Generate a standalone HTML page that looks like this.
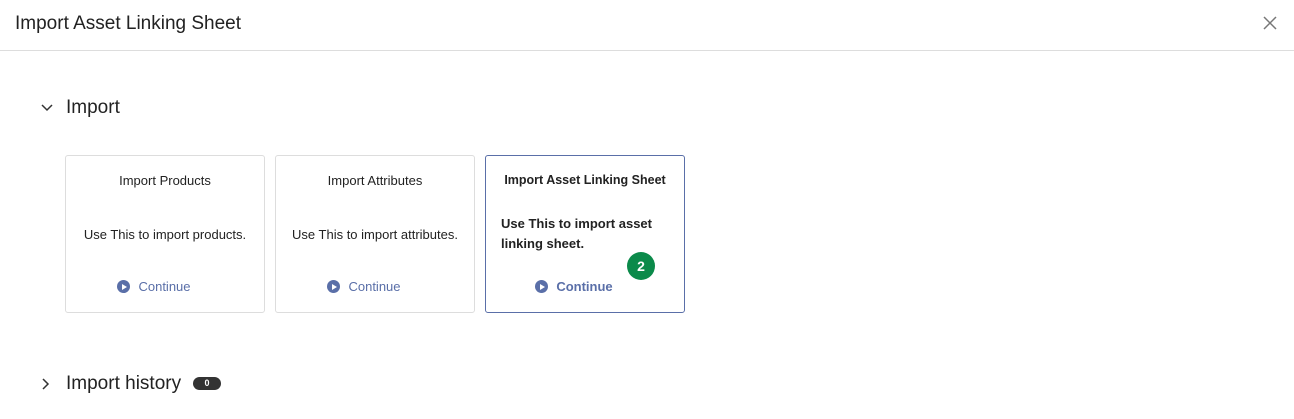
<!DOCTYPE html>
<html><head><style>
body{margin:0;width:1294px;height:419px;background:#fff;font-family:"Liberation Sans",sans-serif;color:#222;position:relative;overflow:hidden}
.hdr{position:absolute;left:0;top:0;width:1294px;height:50px;border-bottom:1px solid #ddd}
.t{position:absolute;left:15px;top:13px;font-size:19px;color:#222}
.x{position:absolute;left:1262px;top:15px}
.sec{position:absolute;left:66px;font-size:19px;color:#222}
.card{position:absolute;top:155px;width:198px;height:156px;border:1px solid #ddd;border-radius:3px;text-align:center;font-size:13px}
.card .h{position:absolute;top:17px;width:100%}
.card .d{position:absolute;top:71px;width:100%}
.card .c{position:absolute;top:123px;width:100%;color:#5a6fa8;padding-right:22px;box-sizing:border-box}
.ic{display:inline-block;width:13px;height:13px;border-radius:50%;background:#5a6fa8;vertical-align:-2px;margin-right:8px;position:relative}
.ic:after{content:"";position:absolute;left:5px;top:3.5px;border-left:5px solid #fff;border-top:3px solid transparent;border-bottom:3px solid transparent}
</style></head><body>
<div class="hdr"><div class="t">Import Asset Linking Sheet</div>
<svg class="x" width="16" height="16" viewBox="0 0 16 16"><path d="M2 2L14 14M14 2L2 14" stroke="#777" stroke-width="1.5"/></svg></div>
<svg style="position:absolute;left:40px;top:103px" width="14" height="10"><path d="M2 2L7 7L12 2" stroke="#333" stroke-width="1.5" fill="none"/></svg>
<div class="sec" style="top:97px">Import</div>
<div class="card" style="left:65px"><div class="h">Import Products</div><div class="d">Use This to import products.</div><div class="c"><span class="ic"></span>Continue</div></div>
<div class="card" style="left:275px"><div class="h">Import Attributes</div><div class="d">Use This to import attributes.</div><div class="c"><span class="ic"></span>Continue</div></div>
<div class="card" style="left:485px;border-color:#5a6fa8;font-weight:bold"><div class="h" style="font-size:12.5px">Import Asset Linking Sheet</div><div class="d" style="text-align:left;left:15px;top:58px;line-height:20px;width:170px">Use This to import asset linking sheet.</div><div class="c"><span class="ic"></span>Continue</div>
<div style="position:absolute;left:141px;top:96px;width:28px;height:28px;border-radius:50%;background:#0b8a4a;color:#fff;line-height:28px;font-size:14px;padding:0">2</div></div>
<svg style="position:absolute;left:41px;top:377px" width="10" height="14"><path d="M2 2L7 7L2 12" stroke="#333" stroke-width="1.5" fill="none"/></svg>
<div class="sec" style="top:373px">Import history</div>
<div style="position:absolute;left:193px;top:377px;width:28px;height:13px;border-radius:7px;background:#333;color:#fff;font-size:9px;font-weight:bold;text-align:center;line-height:13px">0</div>
</body></html>
